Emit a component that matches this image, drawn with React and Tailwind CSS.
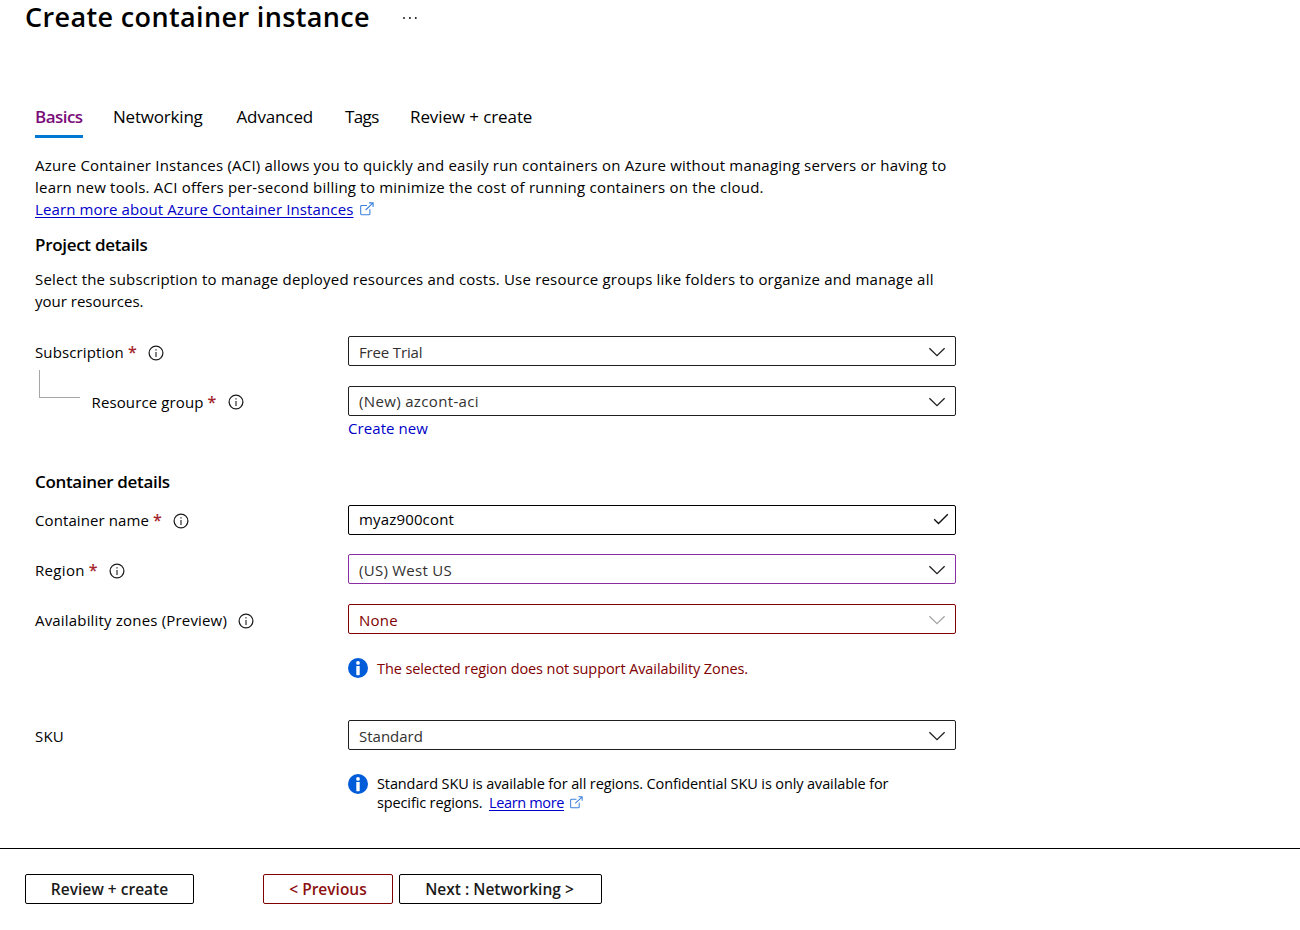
import React from "react";

function InfoOutline() {
  return (
    <svg className="mt-px h-4 w-4 shrink-0" viewBox="0 0 16 16" fill="none">
      <circle cx="8" cy="8" r="6.9" stroke="#1b1b1b" strokeWidth="1.25" />
      <path d="M8 7v5" stroke="#1b1b1b" strokeWidth="1.1" />
      <path d="M8 4.2v1.3" stroke="#1b1b1b" strokeWidth="1.2" />
    </svg>
  );
}

function InfoSolid() {
  return (
    <svg className="h-5 w-5 shrink-0" viewBox="0 0 20 20">
      <circle cx="10" cy="10" r="10" fill="#015cda" />
      <circle cx="10" cy="4.9" r="1.9" fill="#fff" />
      <rect x="8.3" y="8" width="3.4" height="9.2" rx="0.6" fill="#fff" />
    </svg>
  );
}

function External({ className }) {
  return (
    <svg className={className} viewBox="0 0 14 14" fill="none" stroke="#3b82dc" strokeWidth="1.1">
      <path d="M7 3.5H1.6a.9.9 0 0 0-.9.9v7.4c0 .5.4.9.9.9h7.4c.5 0 .9-.4.9-.9V7.2" />
      <path d="M5.6 8 12.8 1.1M9 .9h4.1V5" />
    </svg>
  );
}

function Chevron({ color }) {
  return (
    <svg className="mt-[2px] mr-[9px] h-[10px] w-[18px]" viewBox="0 0 18 10" fill="none">
      <path d="M1.4 1.2 9 8.6l7.6-7.4" stroke={color} strokeWidth="1.3" />
    </svg>
  );
}

function Check() {
  return (
    <svg className="mr-[6px] mb-[2px] h-3 w-4" viewBox="0 0 16 12" fill="none">
      <path d="M1.2 6.2 5.5 10.4 14.8 1.2" stroke="#111" strokeWidth="1.4" />
    </svg>
  );
}

function Required() {
  return <span className="ml-1 w-[9px] text-[16px] font-semibold tracking-normal text-[#a4262c]">*</span>;
}

function Row({ label, labelClass = "pt-[2px]", required, info = true, className, children }) {
  return (
    <div className={`flex h-[30px] ${className}`}>
      <div className={`flex w-[313px] shrink-0 items-center leading-[30px] ${labelClass}`}>
        <span>{label}</span>
        {required && <Required />}
        {info && (
          <span className="ml-[11px]">
            <InfoOutline />
          </span>
        )}
      </div>
      {children}
    </div>
  );
}

function Field({ value, border = "border-[#201f1e]", text = "text-[#323130]", spacing = "", children }) {
  return (
    <div className={`flex h-[30px] w-[608px] items-center justify-between rounded-[2px] border pl-[10px] ${border} ${text}`}>
      <span className={`leading-[28px] ${spacing}`}>{value}</span>
      {children}
    </div>
  );
}

const button =
  "flex h-[30px] items-center justify-center rounded-[2px] border text-[15.5px] font-semibold leading-[28px] whitespace-nowrap";

export default function App() {
  return (
    <div className="flex h-[930px] w-[1300px] flex-col overflow-hidden bg-white font-['Open_Sans','Noto_Sans',sans-serif] text-[15px] text-black">
      <header className="flex h-[34px] shrink-0 items-center pl-[25px]">
        <h1 className="w-[377px] text-[27px] leading-[34px] font-semibold tracking-[0.37px] whitespace-nowrap">
          Create container instance
        </h1>
        <svg className="mt-[2px] h-1 w-4" viewBox="0 0 16 4" fill="#111">
          <circle cx="2" cy="2" r="0.95" />
          <circle cx="7.9" cy="2" r="0.95" />
          <circle cx="13.8" cy="2" r="0.95" />
        </svg>
      </header>

      <main className="flex h-[814px] shrink-0 flex-col pl-[35px]">
        <nav className="mt-[66px] flex h-[38px] shrink-0 text-[17px] leading-[33px] whitespace-nowrap">
          <a className="w-[48px] border-b-[3px] border-[#0078d4] font-semibold tracking-[-0.55px] text-[#7a0c7a]">Basics</a>
          <a className="ml-[30px] w-[90px] tracking-[-0.2px]">Networking</a>
          <a className="ml-[33.5px] w-[76.5px] tracking-[-0.13px]">Advanced</a>
          <a className="ml-[32px] w-[34px] tracking-[-0.6px]">Tags</a>
          <a className="ml-[31px] tracking-[-0.1px]">Review + create</a>
        </nav>

        <div className="mt-[16px] h-[66px] shrink-0 leading-[22px] whitespace-nowrap">
          <p className="tracking-[0.208px]">
            Azure Container Instances (ACI) allows you to quickly and easily run containers on Azure without managing servers or having to
          </p>
          <p className="tracking-[0.22px]">
            learn new tools. ACI offers per-second billing to minimize the cost of running containers on the cloud.
          </p>
          <p className="flex items-center">
            <a className="tracking-[0.124px] text-[#0000c8] underline underline-offset-2">Learn more about Azure Container Instances</a>
            <External className="mb-px ml-[6px] h-[14px] w-[14px]" />
          </p>
        </div>

        <h2 className="mt-[13px] h-6 shrink-0 text-[17px] leading-6 font-semibold tracking-[-0.3px]">Project details</h2>
        <div className="mt-[11px] h-[44px] shrink-0 leading-[22px] whitespace-nowrap">
          <p className="tracking-[0.196px]">
            Select the subscription to manage deployed resources and costs. Use resource groups like folders to organize and manage all
          </p>
          <p>your resources.</p>
        </div>

        <Row className="mt-[24px]" label="Subscription" labelClass="pt-[2px] tracking-[0.13px]" required>
          <Field value="Free Trial" spacing="pt-[2px] tracking-[-0.15px]">
            <Chevron color="#201f1e" />
          </Field>
        </Row>
        <div className="flex h-[50px] shrink-0">
          <div className="mt-1 ml-1 h-[28px] w-[41px] border-b border-l border-[#a6a6a6]" />
          <div className="mt-5 flex h-[30px] w-[268px] shrink-0 items-center pt-[2px] pl-[11.5px] tracking-[0.12px] whitespace-nowrap">
            <span>Resource group</span>
            <Required />
            <span className="mb-[2px] ml-[11.5px]">
              <InfoOutline />
            </span>
          </div>
          <div className="mt-5">
            <Field value="(New) azcont-aci" spacing="tracking-[0.35px]">
              <Chevron color="#201f1e" />
            </Field>
          </div>
        </div>
        <a className="ml-[313px] h-[26px] shrink-0 leading-[24px] tracking-[0.08px] text-[#0000c8]">Create new</a>

        <h2 className="mt-[28px] h-6 shrink-0 text-[17px] leading-6 font-semibold tracking-[-0.33px]">Container details</h2>
        <Row className="mt-[11px]" label="Container name" labelClass="tracking-[0.1px]" required>
          <Field value="myaz900cont" border="border-black" text="text-black" spacing="pb-[2px] tracking-[0.16px]">
            <Check />
          </Field>
        </Row>
        <Row className="mt-[19px]" label="Region" labelClass="pt-[2px] tracking-[0.32px]" required>
          <Field value="(US) West US" border="border-[#8a2da5]" spacing="pt-[2px] tracking-[0.27px]">
            <Chevron color="#201f1e" />
          </Field>
        </Row>
        <Row className="mt-[20px]" label="Availability zones (Preview)" labelClass="pt-[2px] tracking-[0.18px]">
          <Field value="None" border="border-[#800000]" text="text-[#800000]" spacing="pt-[2px] tracking-[0.26px]">
            <Chevron color="#a6a6a6" />
          </Field>
        </Row>
        <div className="mt-[24px] ml-[313px] flex h-5 shrink-0 items-center text-[14.5px]">
          <InfoSolid />
          <p className="ml-[9px] pt-[2px] leading-5 tracking-[-0.094px] text-[#800000]">
            The selected region does not support Availability Zones.
          </p>
        </div>
        <Row className="mt-[42px]" label="SKU" labelClass="pt-[2px] tracking-[0.2px]" info={false}>
          <Field value="Standard" spacing="pt-[2px]">
            <Chevron color="#201f1e" />
          </Field>
        </Row>
        <div className="mt-[24px] ml-[313px] flex h-[40px] shrink-0 text-[14.5px]">
          <InfoSolid />
          <div className="ml-[9px] leading-[19px] whitespace-nowrap">
            <p className="tracking-[-0.112px]">
              Standard SKU is available for all regions. Confidential SKU is only available for
            </p>
            <p className="flex items-center">
              <span className="w-[112px] tracking-[-0.13px]">specific regions.</span>
              <a className="tracking-[-0.35px] text-[#0000c8] underline underline-offset-2">Learn more</a>
              <External className="ml-[6px] h-[13px] w-[13px]" />
            </p>
          </div>
        </div>
      </main>

      <footer className="flex h-[82px] shrink-0 border-t border-black pt-[25px] pl-[25px]">
        <button className={`${button} w-[169px] border-black text-[#1a1a1a]`}>Review + create</button>
        <button className={`${button} ml-[69px] w-[130px] border-[#800000] text-[#8c1010]`}>&lt; Previous</button>
        <button className={`${button} ml-[6px] w-[203px] border-black pr-[2px] text-[#1a1a1a]`}>Next : Networking &gt;</button>
      </footer>
    </div>
  );
}
